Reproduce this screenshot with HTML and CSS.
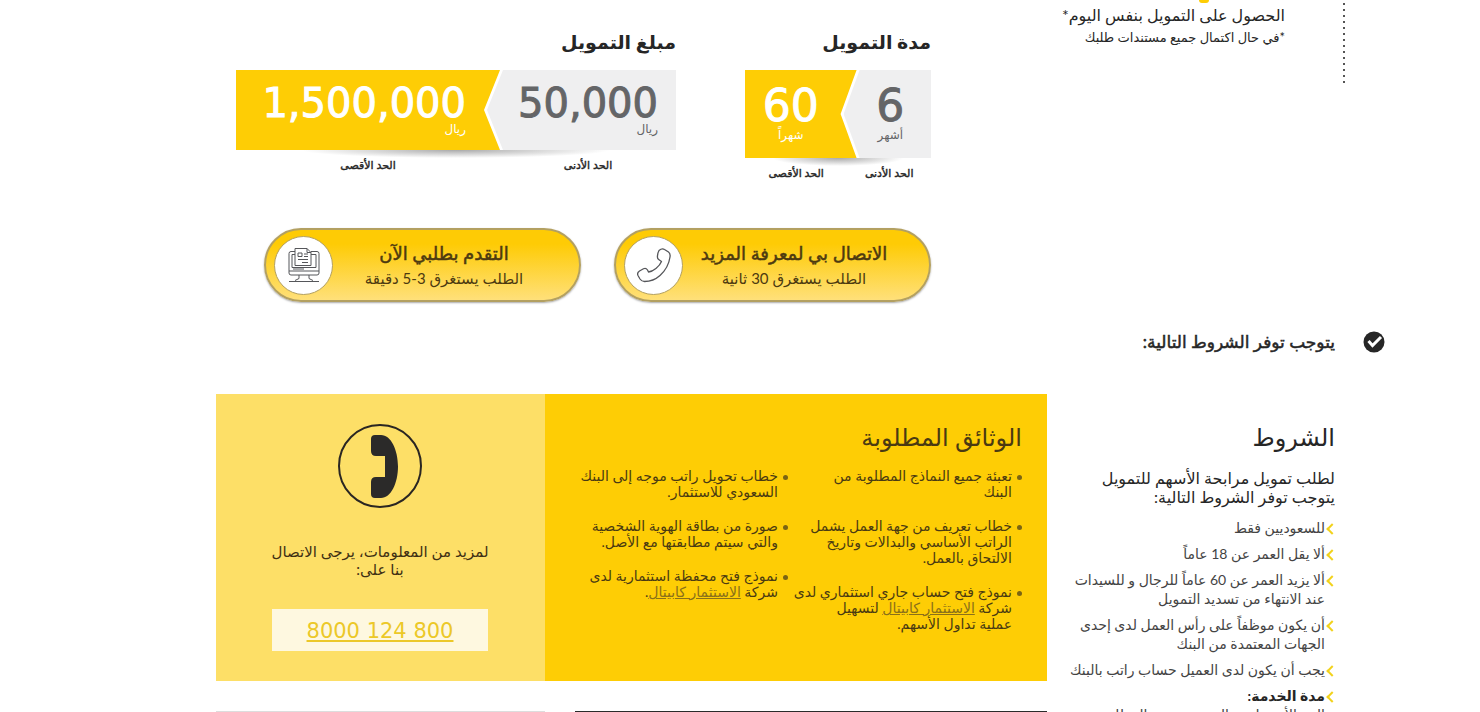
FILE: index.html
```
<!DOCTYPE html>
<html lang="ar" dir="rtl">
<head>
    <meta charset="UTF-8">
    <meta name="viewport" content="width=device-width, initial-scale=1.0">
    <title>تمويل مرابحة الأسهم</title>
    <link rel="stylesheet" href="styles.css">
</head>
<body>
    <div class="page">
        <section class="top">
            <div class="step">
                <div class="step-dot"></div>
                <p class="step-title">الحصول على التمويل بنفس اليوم*</p>
                <p class="step-note">*في حال اكتمال جميع مستندات طلبك</p>
            </div>
            <div class="offer">
                <div class="ranges">
                    <div class="range range-period">
                        <h3>مدة التمويل</h3>
                        <div class="band">
                            <div class="band-min"><span class="num">6</span><span class="unit">أشهر</span></div>
                            <div class="band-max"><span class="num">60</span><span class="unit">شهراً</span></div>
                        </div>
                        <div class="shade"></div>
                        <div class="limits"><span>الحد الأدنى</span><span>الحد الأقصى</span></div>
                    </div>
                    <div class="range range-amount">
                        <h3>مبلغ التمويل</h3>
                        <div class="band">
                            <div class="band-min"><span class="num">50,000</span><span class="unit">ريال</span></div>
                            <div class="band-max"><span class="num">1,500,000</span><span class="unit">ريال</span></div>
                        </div>
                        <div class="shade"></div>
                        <div class="limits"><span>الحد الأدنى</span><span>الحد الأقصى</span></div>
                    </div>
                </div>
                <div class="actions">
                    <button type="button" class="pill">
                        <span class="pill-text"><strong>الاتصال بي لمعرفة المزيد</strong><span>الطلب يستغرق 30 ثانية</span></span>
                        <span class="pill-icon">
                            <svg width="36" height="36" viewBox="0 0 36 36" fill="none" stroke="#55565a" stroke-width="1.3" stroke-linejoin="round">
                                <path d="M23 3.500C25 1.800 27 1.500 28.500 2.500L32.500 5C34 6 34.300 8 34 10C33 17 29 24 24 28.500C19 33 13 34.500 8.500 34.500C6.500 34.500 5 33.500 4 32L2 28.500C1 26.500 2 25 3.500 24L7.500 21.800C9 21 10.500 21.500 11.500 23L12.500 25C17 24.500 23.500 19.500 25.500 14.500L23 12.800C21.500 11.800 21.200 10.500 21.500 9C21.700 7 22 5 23 3.500Z"/>
                            </svg>
                        </span>
                    </button>
                    <button type="button" class="pill">
                        <span class="pill-text"><strong>التقدم بطلبي الآن</strong><span>الطلب يستغرق 3-5 دقيقة</span></span>
                        <span class="pill-icon">
                            <svg width="36" height="36" viewBox="0 0 36 36" fill="none" stroke="#55565a" stroke-width="1">
                                <path d="M9 4.500H5Q3 4.500 3 6.500V26Q3 28 5 28H31Q33 28 33 26V6.500Q33 4.500 31 4.500H25"/>
                                <path d="M9 7.500H6V20.500H30V7.500H25M3 24H33M7 22H18"/>
                                <path d="M9 18.500V1.500H21L25 5.500V18.500ZM21 1.500V5.500H25"/>
                                <path d="M12 6H16V9.500H12ZM18 7H22M18 9.500H22M12 12.500H22M16 15.500H22"/>
                                <path d="M13 28V31.500L9 33.500M23 28V31.500L27 33.500M3 34.500H33"/>
                            </svg>
                        </span>
                    </button>
                </div>
            </div>
        </section>

        <div class="check-title">
            <svg width="22" height="22" viewBox="0 0 22 22">
                <circle cx="11" cy="11" r="10.500" fill="#262626"/>
                <path d="M5.500 10L9.500 14.500L18 6" fill="none" stroke="#fff" stroke-width="3"/>
            </svg>
            <h4>يتوجب توفر الشروط التالية:</h4>
        </div>

        <section class="info">
            <div class="terms">
                <h2>الشروط</h2>
                <p class="terms-intro">لطلب تمويل مرابحة الأسهم للتمويل<br>يتوجب توفر الشروط التالية:</p>
                <ul>
                    <li>للسعوديين فقط</li>
                    <li>ألا يقل العمر عن 18 عاماً</li>
                    <li>ألا يزيد العمر عن 60 عاماً للرجال و للسيدات<br>عند الانتهاء من تسديد التمويل</li>
                    <li>أن يكون موظفاً على رأس العمل لدى إحدى<br>الجهات المعتمدة من البنك</li>
                    <li>يجب أن يكون لدى العميل حساب راتب بالبنك</li>
                    <li><strong>مدة الخدمة:</strong><br>الحد الأدنى لمدة الخدمة حسب المطلوب</li>
                </ul>
            </div>
            <div class="side">
                <div class="boxes">
                    <div class="docs">
                        <h2>الوثائق المطلوبة</h2>
                        <div class="docs-cols">
                            <ul>
                                <li>تعبئة جميع النماذج المطلوبة من<br>البنك</li>
                                <li>خطاب تعريف من جهة العمل يشمل<br>الراتب الأساسي والبدالات وتاريخ<br>الالتحاق بالعمل.</li>
                                <li>نموذج فتح حساب جاري استثماري لدى<br>شركة <a href="#">الاستثمار كابيتال</a> لتسهيل<br>عملية تداول الأسهم.</li>
                            </ul>
                            <ul>
                                <li>خطاب تحويل راتب موجه إلى البنك<br>السعودي للاستثمار.</li>
                                <li>صورة من بطاقة الهوية الشخصية<br>والتي سيتم مطابقتها مع الأصل.</li>
                                <li>نموذج فتح محفظة استثمارية لدى<br>شركة <a href="#">الاستثمار كابيتال</a>.</li>
                            </ul>
                        </div>
                    </div>
                    <div class="contact">
                        <svg width="84" height="84" viewBox="0 0 84 84">
                            <circle cx="42" cy="42" r="41" fill="none" stroke="#2a2622" stroke-width="2"/>
                            <path d="M37 11H43C53 11 60 26 60 42.500C60 59 53 74 43 74H37Q33 74 33 70V58Q33 53 38 53H47V32H38Q33 32 33 27V15Q33 11 37 11Z" fill="#2b2a29"/>
                        </svg>
                        <p>لمزيد من المعلومات، يرجى الاتصال<br>بنا على:</p>
                        <a class="phone" href="tel:8001248000" dir="ltr">8000 124 800</a>
                    </div>
                </div>
                <div class="next">
                    <div class="next-main"></div>
                    <div class="next-side"></div>
                </div>
            </div>
        </section>
    </div>
</body>
</html>
```
FILE: styles.css
```
* {
    box-sizing: border-box;
}
body {
    margin: 0;
    background-color: #fff;
    color: #262626;
    font-family: Lato, "DejaVu Sans", sans-serif;
    font-size: 14px;
}
h2, h3, h4, p, ul {
    margin: 0;
    padding: 0;
    font-weight: normal;
}
ul {
    list-style: none;
}
.page {
    height: 100vh;
    overflow: hidden;
    padding: 0 95px 0 216px;
}
.top {
    display: flex;
    justify-content: space-between;
    height: 302px;
    padding-right: 40px;
}
.step {
    height: 84px;
    padding-right: 60px;
    white-space: nowrap;
    background: repeating-linear-gradient(#fff 0 3px, #555 3px 5px, #fff 5px 6px) right / 2px 100% no-repeat;
}
.step-dot {
    width: 10px;
    height: 3px;
    margin-right: 76px;
    border-radius: 0 0 5px 5px;
    background-color: #fecd05;
}
.step-title {
    font-size: 16px;
    line-height: 24px;
}
.step-note {
    font-size: 13px;
    line-height: 20px;
}
.offer {
    width: 715px;
    padding: 28px 0 0 20px;
}
.ranges {
    display: flex;
    justify-content: space-between;
    height: 200px;
}
.range h3 {
    font-size: 19px;
    line-height: 28px;
    margin-bottom: 14px;
    font-weight: bold;
}
.range-period {
    width: 186px;
}
.range-amount {
    width: 440px;
    margin: 0 auto 0 0;
    margin-right: 69px;
}
.band {
    display: flex;
    height: 80px;
}
.range-period .band {
    height: 88px;
}
.band-min, .band-max {
    display: flex;
    flex-direction: column;
    padding-top: 13px;
}
.band-min {
    flex: 1;
    background-color: #efeff0;
    color: #646567;
    margin-left: -13px;
    clip-path: polygon(0 50%, 16px 0, 100% 0, 100% 100%, 16px 100%);
}
.band-max {
    width: 60%;
    background-color: #fecd05;
    color: #fff;
    clip-path: polygon(0 0, 100% 0, calc(100% - 16px) 50%, 100% 100%, 0 100%);
}
.range-amount .band-min {
    padding-right: 18px;
}
.range-amount .band-max {
    padding-right: 34px;
}
.range-period .band-min, .range-period .band-max {
    align-items: center;
}
.range-period .band-min {
    padding-left: 6px;
}
.range-period .band-max {
    padding-right: 20px;
}
.num {
    font-family: "DejaVu Sans", sans-serif;
    font-size: 40px;
    line-height: 40px;
    -webkit-text-stroke: 1px;
}
.range-period .num {
    font-size: 44px;
    line-height: 46px;
}
.unit {
    font-size: 12px;
    line-height: 12px;
}
.shade {
    height: 8px;
    background: radial-gradient(closest-side, #aaa, #fff) center -8px / 70% 16px no-repeat;
}
.limits {
    display: flex;
    font-size: 11px;
    line-height: 14px;
    text-align: center;
    -webkit-text-stroke: 0.4px;
}
.limits span:first-child {
    width: 40%;
}
.limits span:last-child {
    width: 60%;
}
.range-period .limits span:first-child {
    width: 45%;
}
.range-period .limits span:last-child {
    width: 55%;
}
.actions {
    display: flex;
    gap: 33px;
}
.pill {
    display: flex;
    align-items: center;
    width: 317px;
    height: 74px;
    padding: 0 24px 0 8px;
    border: 2px solid #b3a061;
    border-radius: 37px;
    background: linear-gradient(#fecb05 20%, #ffe07a);
    box-shadow: 0 1px 2px #aaa;
    color: #4d3a10;
    font-family: inherit;
    cursor: pointer;
}
.pill-text {
    flex: 1;
    font-size: 15px;
    line-height: 24px;
    white-space: nowrap;
}
.pill-text strong, .pill-text span {
    display: block;
}
.pill-text strong {
    font-size: 18px;
    font-weight: normal;
    line-height: 26px;
    -webkit-text-stroke: 0.5px;
}
.pill-icon {
    display: flex;
    align-items: center;
    justify-content: center;
    width: 59px;
    height: 59px;
    border: 1px solid #b3a061;
    border-radius: 50%;
    background-color: #fff;
}
.check-title {
    display: flex;
    align-items: center;
    gap: 28px;
    padding-top: 28px;
}
.check-title h4 {
    font-size: 17px;
    line-height: 24px;
    -webkit-text-stroke: 0.5px;
}
.info {
    display: flex;
    padding-top: 40px;
}
.terms {
    flex: 1;
    padding: 26px 50px 0 0;
    white-space: nowrap;
}
h2 {
    font-size: 24px;
    line-height: 34px;
}
.terms-intro {
    margin: 14px 0 12px;
    font-size: 16px;
    line-height: 19px;
}
.terms li {
    position: relative;
    margin-bottom: 7px;
    padding-right: 10px;
    color: #444;
    font-size: 14px;
    line-height: 19px;
}
.terms li strong {
    color: #262626;
}
.terms li::before {
    content: "";
    position: absolute;
    top: 7px;
    right: -1px;
    width: 6px;
    height: 6px;
    border: solid #f2d21c;
    border-width: 0 0 2px 2px;
    transform: rotate(45deg);
}
.side {
    flex: none;
    width: 831px;
}
.boxes {
    display: flex;
    height: 287px;
}
.docs {
    flex: 1;
    min-width: 0;
    padding: 26px 25px 0;
    background-color: #fecd05;
    color: #4a3a12;
    white-space: nowrap;
}
.docs-cols {
    display: flex;
    padding-top: 14px;
}
.docs-cols ul {
    flex: none;
    width: 234px;
}
.docs li {
    position: relative;
    margin-bottom: 18px;
    padding-right: 10px;
    font-size: 14px;
    line-height: 16px;
}
.docs li::before {
    content: "";
    position: absolute;
    top: 7px;
    right: 0;
    width: 5px;
    height: 5px;
    border-radius: 50%;
    background-color: #7a6414;
}
.docs a {
    color: #8a701a;
}
.contact {
    display: flex;
    flex: none;
    flex-direction: column;
    align-items: center;
    width: 329px;
    padding: 30px 1px 0 0;
    background-color: #fddf67;
    color: #3f3013;
    text-align: center;
    white-space: nowrap;
}
.contact p {
    margin: 34px 0 31px;
    font-size: 15px;
    line-height: 18px;
}
.phone {
    width: 216px;
    height: 42px;
    background-color: #fef8e0;
    color: #ecc828;
    font-family: "DejaVu Sans", sans-serif;
    font-size: 21px;
    line-height: 44px;
}
.next {
    display: flex;
    gap: 30px;
    padding-top: 30px;
}
.next-main {
    flex: 1;
    height: 100px;
    border-top: 2px solid #2b2b2b;
}
.next-side {
    width: 329px;
    border-top: 1px solid #ddd;
}
```
